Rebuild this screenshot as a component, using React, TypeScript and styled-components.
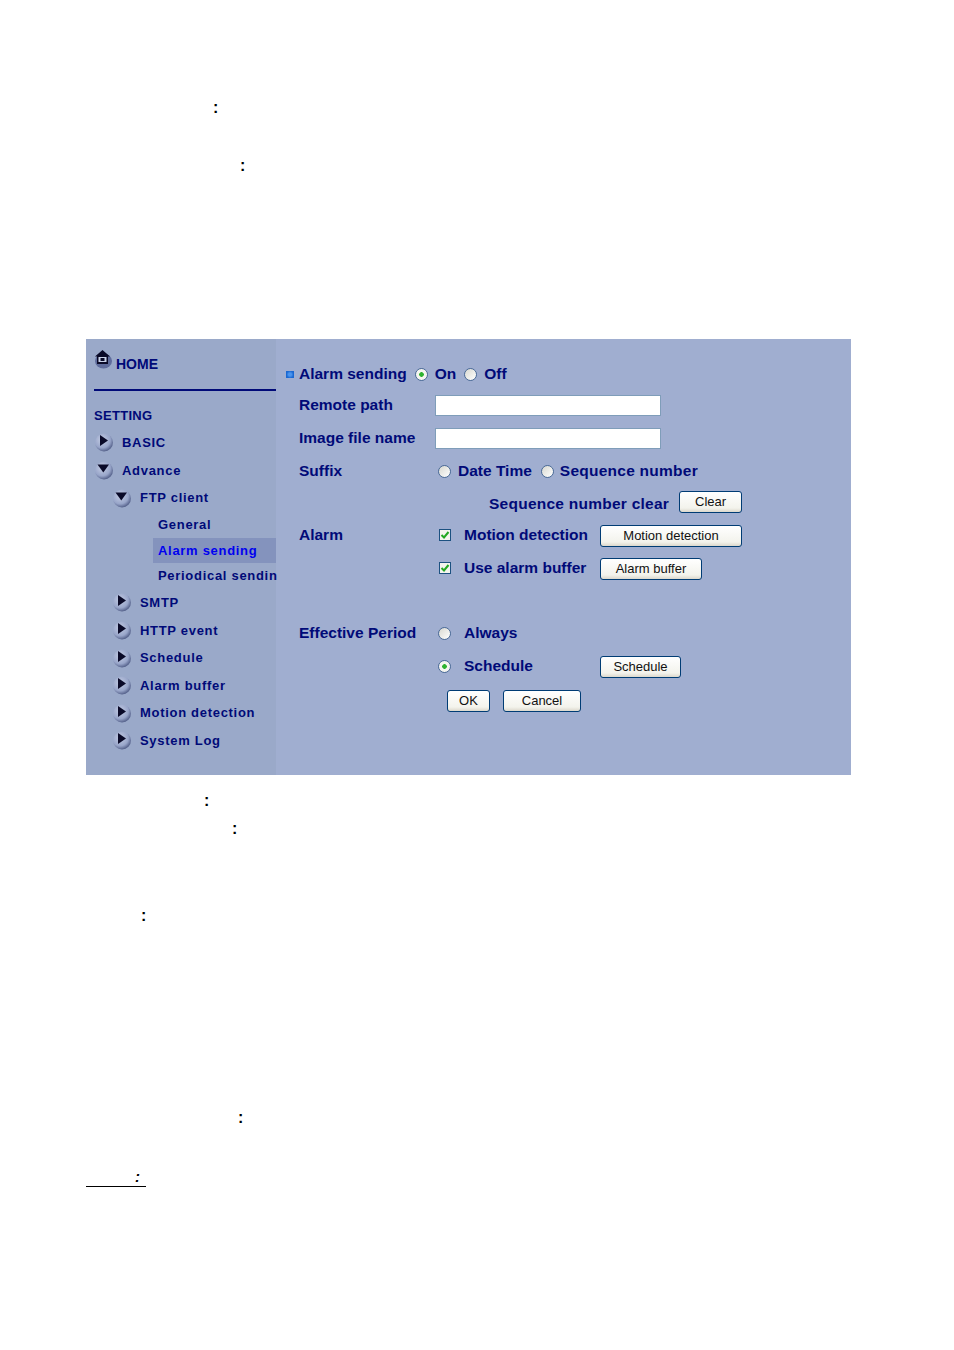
import React from 'react';
import styled, { createGlobalStyle } from 'styled-components';

const GlobalStyle = createGlobalStyle`
  html, body {
    margin: 0;
    padding: 0;
    background: #ffffff;
  }
  body {
    font-family: "Liberation Sans", Arial, sans-serif;
  }
`;

const navy = '#000a78';

const Page = styled.div`
  width: 954px;
  height: 1350px;
  box-sizing: border-box;
  padding: 100px 0 0 86px;
`;

const ColonLine = styled.div<{ $indent: number; $top: number }>`
  height: 16px;
  line-height: 16px;
  margin-top: ${(p) => p.$top}px;
  padding-left: ${(p) => p.$indent}px;
  font-size: 16px;
  font-weight: 700;
  color: #000000;
`;

const Panel = styled.div`
  display: flex;
  width: 765px;
  height: 436px;
  margin-top: 165px;
  background: #a0aed0;
  color: ${navy};
`;

const Sidebar = styled.nav`
  width: 190px;
  flex-shrink: 0;
  box-sizing: border-box;
  padding: 10px 0 0 8px;
  background: #9aa9c9;
  font-weight: 700;
  font-size: 13px;
`;

const HomeRow = styled.div`
  display: flex;
  align-items: flex-start;
  gap: 3px;
  height: 40px;
  border-bottom: 2px solid ${navy};
  font-size: 14px;
`;

const HomeLabel = styled.span`
  margin-top: 7px;
`;

const SettingTitle = styled.div`
  margin: 17px 0 4px;
  height: 16px;
  line-height: 16px;
  letter-spacing: 0.3px;
`;

const NavItem = styled.div<{ $level: number; $height: number }>`
  display: flex;
  align-items: center;
  height: ${(p) => p.$height}px;
  margin-left: ${(p) => [0, 18, 36][p.$level]}px;
  letter-spacing: 0.7px;
  white-space: nowrap;
`;

const LeafItem = styled.div<{ $height: number; $active?: boolean }>`
  display: flex;
  align-items: center;
  height: ${(p) => p.$height}px;
  margin-left: 59px;
  padding-left: 5px;
  letter-spacing: 0.7px;
  white-space: nowrap;
  color: ${(p) => (p.$active ? '#0000f0' : navy)};
  background: ${(p) => (p.$active ? '#8493bd' : 'transparent')};
`;

const ClippedText = styled.span`
  display: block;
  width: 119px;
  flex-shrink: 0;
  overflow: hidden;
`;

const BulletIcon = styled.svg`
  width: 20px;
  height: 20px;
  margin-right: 8px;
  flex-shrink: 0;
`;

const Form = styled.main`
  flex: 1;
  box-sizing: border-box;
  padding: 25px 0 0 10px;
  font-size: 15.5px;
  font-weight: 700;
`;

const Row = styled.div<{ $height: number }>`
  display: flex;
  align-items: center;
  height: ${(p) => p.$height}px;
`;

const Marker = styled.span`
  width: 8px;
  height: 7px;
  margin-right: 5px;
  background: radial-gradient(circle, #4a94ee 0 1.5px, #1a68d2 3.5px);
  flex-shrink: 0;
`;

const Label = styled.span`
  width: 136px;
  margin-left: 13px;
  flex-shrink: 0;
  white-space: nowrap;
`;

const Caption = styled.span<{ $gap?: number; $width?: number; $spread?: boolean }>`
  margin-left: ${(p) => p.$gap ?? 0}px;
  width: ${(p) => (p.$width ? `${p.$width}px` : 'auto')};
  letter-spacing: ${(p) => (p.$spread ? '0.25px' : 'normal')};
  white-space: nowrap;
  flex-shrink: 0;
`;

const TextField = styled.input`
  width: 226px;
  height: 21px;
  box-sizing: border-box;
  padding: 0;
  border: 1px solid #7f9db9;
  background: #ffffff;
`;

const Radio = styled.span<{ $on?: boolean; $gap?: number }>`
  display: inline-block;
  width: 13px;
  height: 13px;
  box-sizing: border-box;
  margin-left: ${(p) => p.$gap ?? 0}px;
  border: 1px solid #4a6a96;
  border-radius: 50%;
  flex-shrink: 0;
  background: ${(p) =>
    p.$on
      ? 'radial-gradient(circle, #2fb32f 0 2px, #f5f5ef 2.6px)'
      : 'linear-gradient(135deg, #d8d8d0, #ffffff)'};
`;

const CheckBox = styled.span`
  display: inline-flex;
  align-items: center;
  justify-content: center;
  width: 12px;
  height: 12px;
  box-sizing: border-box;
  margin-left: 4px;
  border: 1px solid #1c5180;
  background: #f4f4ee;
  flex-shrink: 0;
`;

const Button = styled.button<{ $width: number; $gap?: number; $lift?: boolean }>`
  width: ${(p) => p.$width}px;
  height: 22px;
  box-sizing: border-box;
  margin: ${(p) => (p.$lift ? '0 0 4px' : '2px 0 0')};
  margin-left: ${(p) => p.$gap ?? 0}px;
  padding: 0 0 2px;
  border: 1px solid #003c74;
  border-radius: 3px;
  background: linear-gradient(180deg, #ffffff, #f3f3ec 80%, #dcd8cc);
  color: #111111;
  font-family: "Liberation Sans", Arial, sans-serif;
  font-size: 13px;
  flex-shrink: 0;
`;

const Spacer = styled.div<{ $height: number }>`
  height: ${(p) => p.$height}px;
`;

const UnderlinedNote = styled.div`
  width: 60px;
  height: 17px;
  margin-top: 44px;
  padding-left: 49px;
  box-sizing: border-box;
  border-bottom: 1px solid #000000;
  line-height: 14px;
  font-size: 15px;
  font-style: italic;
  font-weight: 700;
`;

const Bullet = ({ down }: { down?: boolean }) => (
  <BulletIcon viewBox="0 0 20 20">
    <defs>
      <radialGradient id="bulletFill" cx="0.4" cy="0.35" r="0.75">
        <stop offset="0" stopColor="#c4cde4" />
        <stop offset="0.6" stopColor="#98a5c9" />
        <stop offset="1" stopColor="#36426e" />
      </radialGradient>
    </defs>
    <ellipse cx="10" cy="10.5" rx="9" ry="9" fill="url(#bulletFill)" />
    <path d={down ? 'M3.5 4.5h11.5l-5.7 8z' : 'M6 3l8 5.5-8 5.5z'} fill="#0a0a28" />
  </BulletIcon>
);

const HomeIcon = () => (
  <svg width="19" height="20" viewBox="0 0 19 20">
    <ellipse cx="9.5" cy="12" rx="8.5" ry="7.5" fill="#5f6c9c" />
    <path d="M8.500 1L1 7.500h2V15h11V7.500h2z" fill="#0a0a28" />
    <rect x="4.500" y="8" width="8" height="5" fill="#c9d2e8" />
    <rect x="6.500" y="9" width="4" height="3" fill="#0a0a28" />
  </svg>
);

const Tick = () => (
  <svg width="10" height="10" viewBox="0 0 10 10">
    <path d="M1.500 5l2.500 2.500L8.500 2" fill="none" stroke="#22a822" strokeWidth="2" />
  </svg>
);

const App: React.FC = () => {
  return (
    <Page>
      <GlobalStyle />
      <ColonLine $indent={127} $top={0}>:</ColonLine>
      <ColonLine $indent={154} $top={42}>:</ColonLine>
      <Panel>
        <Sidebar>
          <HomeRow>
            <HomeIcon />
            <HomeLabel>HOME</HomeLabel>
          </HomeRow>
          <SettingTitle>SETTING</SettingTitle>
          <NavItem $level={0} $height={28}><Bullet />BASIC</NavItem>
          <NavItem $level={0} $height={28}><Bullet down />Advance</NavItem>
          <NavItem $level={1} $height={27}><Bullet down />FTP client</NavItem>
          <LeafItem $height={27}>General</LeafItem>
          <LeafItem $height={25} $active>Alarm sending</LeafItem>
          <LeafItem $height={25}><ClippedText>Periodical sending</ClippedText></LeafItem>
          <NavItem $level={1} $height={28}><Bullet />SMTP</NavItem>
          <NavItem $level={1} $height={28}><Bullet />HTTP event</NavItem>
          <NavItem $level={1} $height={27}><Bullet />Schedule</NavItem>
          <NavItem $level={1} $height={28}><Bullet />Alarm buffer</NavItem>
          <NavItem $level={1} $height={27}><Bullet />Motion detection</NavItem>
          <NavItem $level={1} $height={28}><Bullet />System Log</NavItem>
        </Sidebar>
        <Form>
          <Row $height={20}>
            <Marker />
            <Caption>Alarm sending</Caption>
            <Radio $on $gap={8} />
            <Caption $gap={7}>On</Caption>
            <Radio $gap={8} />
            <Caption $gap={7}>Off</Caption>
          </Row>
          <Row $height={42}>
            <Label>Remote path</Label>
            <TextField />
          </Row>
          <Row $height={24}>
            <Label>Image file name</Label>
            <TextField />
          </Row>
          <Row $height={42}>
            <Label>Suffix</Label>
            <Radio $gap={3} />
            <Caption $gap={7}>Date Time</Caption>
            <Radio $gap={9} />
            <Caption $gap={6} $spread>Sequence number</Caption>
          </Row>
          <Row $height={24}>
            <Caption $gap={203} $spread>Sequence number clear</Caption>
            <Button $width={63} $gap={10} $lift>Clear</Button>
          </Row>
          <Row $height={38}>
            <Label>Alarm</Label>
            <CheckBox><Tick /></CheckBox>
            <Caption $gap={13} $width={136}>Motion detection</Caption>
            <Button $width={142}>Motion detection</Button>
          </Row>
          <Row $height={28}>
            <Label />
            <CheckBox><Tick /></CheckBox>
            <Caption $gap={13} $width={136}>Use alarm buffer</Caption>
            <Button $width={102}>Alarm buffer</Button>
          </Row>
          <Spacer $height={37} />
          <Row $height={28}>
            <Label>Effective Period</Label>
            <Radio $gap={3} />
            <Caption $gap={13}>Always</Caption>
          </Row>
          <Row $height={38}>
            <Label />
            <Radio $on $gap={3} />
            <Caption $gap={13} $width={136}>Schedule</Caption>
            <Button $width={81}>Schedule</Button>
          </Row>
          <Row $height={30}>
            <Button $width={43} $gap={161}>OK</Button>
            <Button $width={78} $gap={13}>Cancel</Button>
          </Row>
        </Form>
      </Panel>
      <ColonLine $indent={118} $top={18}>:</ColonLine>
      <ColonLine $indent={146} $top={12}>:</ColonLine>
      <ColonLine $indent={55} $top={71}>:</ColonLine>
      <ColonLine $indent={152} $top={186}>:</ColonLine>
      <UnderlinedNote>:</UnderlinedNote>
    </Page>
  );
};

export default App;
